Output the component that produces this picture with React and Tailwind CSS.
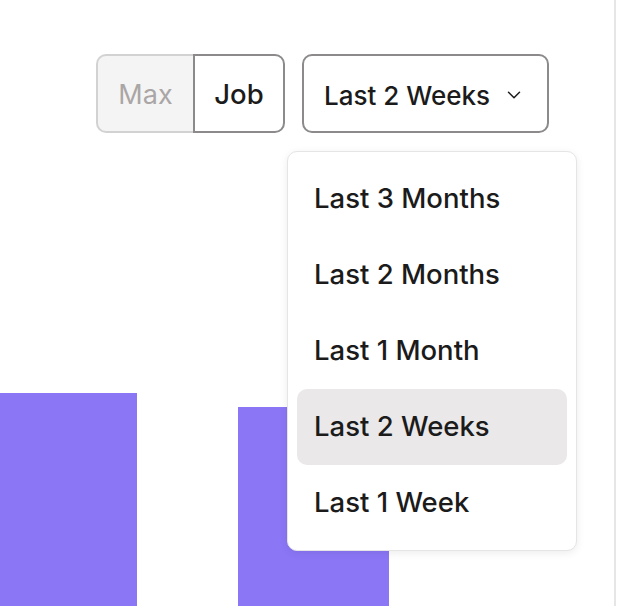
import { ChevronDown } from "lucide-react";

const ranges = ["Last 3 Months", "Last 2 Months", "Last 1 Month", "Last 2 Weeks", "Last 1 Week"];

export default function App() {
  const selected = "Last 2 Weeks";

  return (
    <div
      className="relative h-[606px] w-[642px] overflow-hidden bg-white text-[#1c1b1b]"
      style={{ fontFamily: "Inter, 'Noto Sans', sans-serif" }}
    >
      <div className="flex h-full">
        {/* Main panel */}
        <div className="flex h-full w-[616px] flex-col border-r-2 border-[#e7e6e6]">
          {/* Controls */}
          <div className="flex justify-end gap-[17px] pt-[54px] pr-[65px]">
            <div className="flex h-[79px]">
              <button className="w-[97px] rounded-l-[10px] border-2 border-r-0 border-[#d3d2d2] bg-[#f4f4f4] pt-[3px] text-[27px] text-[#aaa6a6]">
                Max
              </button>
              <button className="w-[92px] rounded-r-[10px] border-2 border-[#8c8a8a] bg-white pt-[3px] text-[27.5px] font-medium">
                Job
              </button>
            </div>
            <button className="flex h-[79px] w-[247px] items-center justify-between rounded-[10px] border-2 border-[#8c8a8a] bg-white pl-[20px] pr-[22px] pt-[3px] text-[26px] font-medium">
              {selected}
              <ChevronDown size={22} strokeWidth={1.6} />
            </button>
          </div>

          {/* Chart */}
          <div className="mt-[260px] flex flex-1 gap-[101px]">
            <div className="w-[137px] bg-[#8b76f6]" />
            <div className="mt-[14px] w-[151px] bg-[#8b76f6]" />
          </div>
        </div>
      </div>

      {/* Range menu */}
      <div className="absolute left-[287px] top-[151px] w-[290px] rounded-[10px] border border-[#e6e5e5] bg-white p-[9px] shadow-[0_2px_8px_rgba(0,0,0,0.08)]">
        {ranges.map((r) => (
          <div
            key={r}
            className={`flex h-[76px] items-center rounded-[10px] px-[17px] text-[27.5px] font-medium ${
              r === selected ? "bg-[#eae8e9]" : ""
            }`}
          >
            {r}
          </div>
        ))}
      </div>
    </div>
  );
}
